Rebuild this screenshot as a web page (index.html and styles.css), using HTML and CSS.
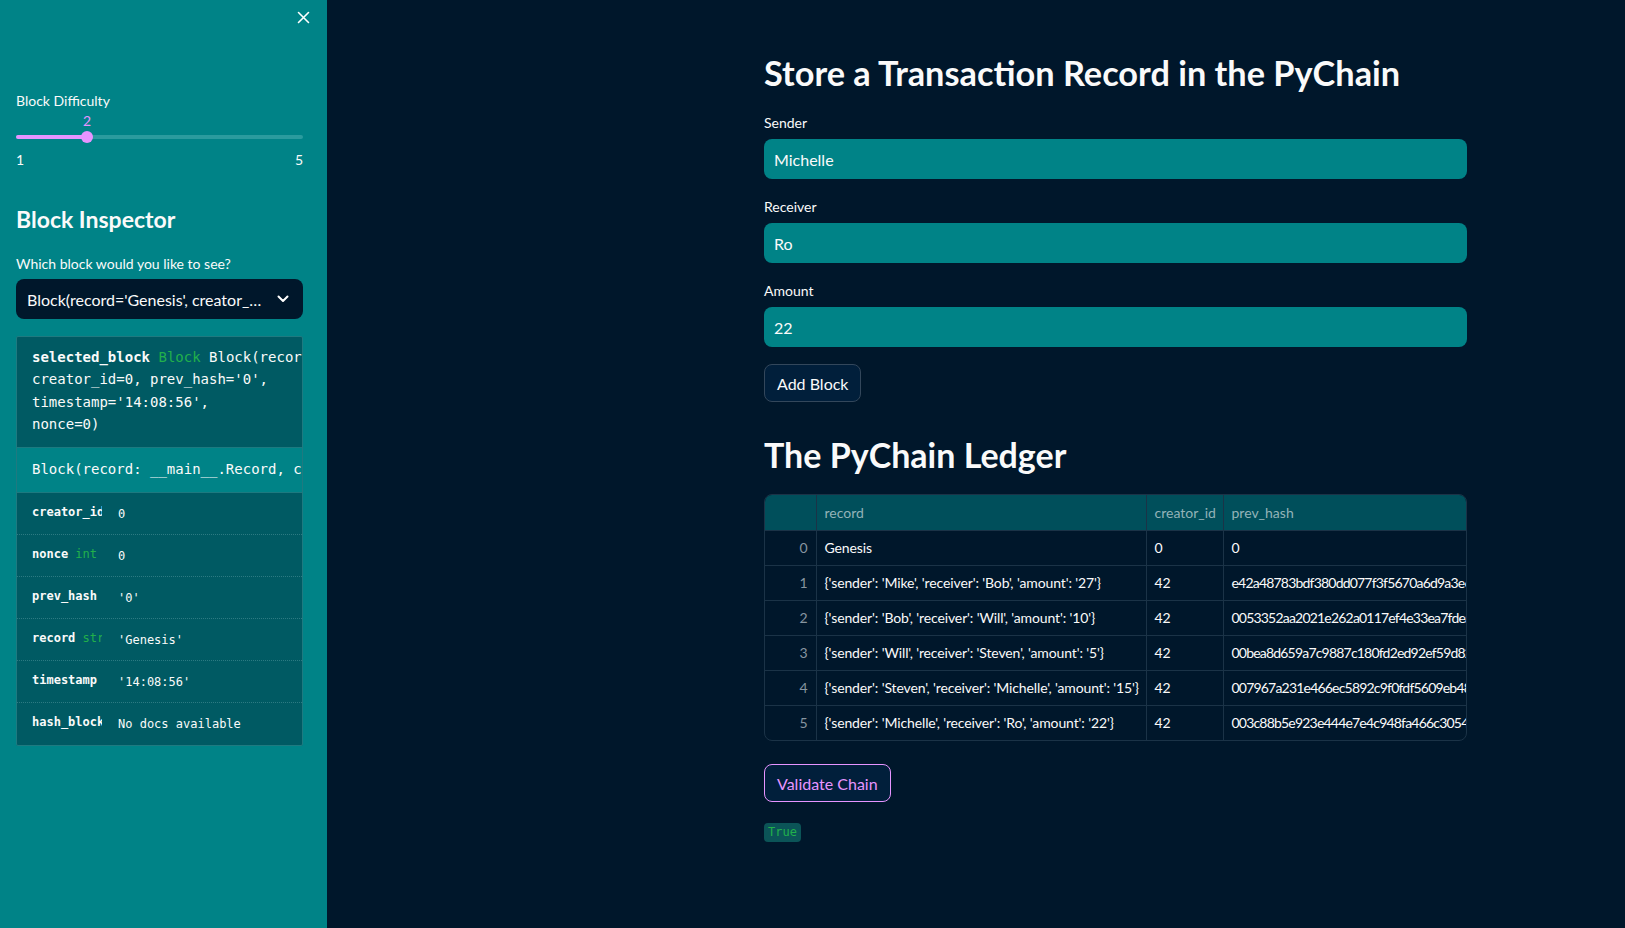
FILE: index.html
```html
<!DOCTYPE html>
<html lang="en">
<head>
<meta charset="utf-8">
<title>PyChain</title>
<link rel="stylesheet" href="styles.css">
</head>
<body>
<div class="app">
  <aside class="sidebar">
    <button class="close-btn" aria-label="Close sidebar">
      <svg width="13" height="13" viewBox="0 0 13 13"><path d="M1.5 1.5L11.5 11.5M11.5 1.5L1.5 11.5" stroke="#ffffff" stroke-width="1.6" stroke-linecap="round"/></svg>
    </button>

    <div class="widget-label">Block Difficulty</div>
    <div class="slider">
      <div class="slider-value-row"><span class="slider-value">2</span></div>
      <div class="slider-track">
        <div class="slider-fill"></div>
        <div class="slider-thumb"></div>
      </div>
      <div class="slider-range"><span>1</span><span>5</span></div>
    </div>

    <h2 class="side-heading">Block Inspector</h2>
    <div class="widget-label">Which block would you like to see?</div>
    <div class="select">
      <span class="select-text">Block(record='Genesis', creator_…</span>
      <svg class="chevron" width="12" height="8" viewBox="0 0 12 8"><path d="M1.5 1.5L6 6L10.5 1.5" fill="none" stroke="#ffffff" stroke-width="2" stroke-linecap="round" stroke-linejoin="round"/></svg>
    </div>

    <div class="inspect">
      <pre class="inspect-code"><b>selected_block</b> <span class="green">Block</span> Block(record='Genesis',
creator_id=0, prev_hash='0',
timestamp='14:08:56',
nonce=0)</pre>
      <div class="inspect-sig">Block(record: __main__.Record, creator_id: int, prev_hash: str = '0')</div>
      <div class="attr-row"><div class="attr-name"><b>creator_id</b> <span class="green">int</span></div><div class="attr-val">0</div></div>
      <div class="attr-row"><div class="attr-name"><b>nonce</b> <span class="green">int</span></div><div class="attr-val">0</div></div>
      <div class="attr-row"><div class="attr-name"><b>prev_hash</b> <span class="green">str</span></div><div class="attr-val">'0'</div></div>
      <div class="attr-row"><div class="attr-name"><b>record</b> <span class="green">str</span></div><div class="attr-val">'Genesis'</div></div>
      <div class="attr-row"><div class="attr-name"><b>timestamp</b> <span class="green">str</span></div><div class="attr-val">'14:08:56'</div></div>
      <div class="attr-row last"><div class="attr-name"><b>hash_block</b></div><div class="attr-val">No docs available</div></div>
    </div>
  </aside>

  <main class="main">
    <div class="content">
      <h1 class="title">Store a Transaction Record in the PyChain</h1>

      <div class="fields">
        <div class="field">
          <label class="field-label">Sender</label>
          <div class="input">Michelle</div>
        </div>
        <div class="field">
          <label class="field-label">Receiver</label>
          <div class="input">Ro</div>
        </div>
        <div class="field">
          <label class="field-label">Amount</label>
          <div class="input">22</div>
        </div>
      </div>

      <button class="btn">Add Block</button>

      <h2 class="heading">The PyChain Ledger</h2>

      <div class="table-wrap">
        <table class="ledger">
          <colgroup>
            <col class="c-idx"><col class="c-rec"><col class="c-cre"><col class="c-hash">
          </colgroup>
          <thead>
            <tr><th></th><th>record</th><th>creator_id</th><th>prev_hash</th></tr>
          </thead>
          <tbody>
            <tr><td class="idx">0</td><td>Genesis</td><td>0</td><td class="hash">0</td></tr>
            <tr><td class="idx">1</td><td>{'sender': 'Mike', 'receiver': 'Bob', 'amount': '27'}</td><td>42</td><td class="hash">e42a48783bdf380dd077f3f5670a6d9a3e6</td></tr>
            <tr><td class="idx">2</td><td>{'sender': 'Bob', 'receiver': 'Will', 'amount': '10'}</td><td>42</td><td class="hash">0053352aa2021e262a0117ef4e33ea7fdea</td></tr>
            <tr><td class="idx">3</td><td>{'sender': 'Will', 'receiver': 'Steven', 'amount': '5'}</td><td>42</td><td class="hash">00bea8d659a7c9887c180fd2ed92ef59d82</td></tr>
            <tr><td class="idx">4</td><td>{'sender': 'Steven', 'receiver': 'Michelle', 'amount': '15'}</td><td>42</td><td class="hash">007967a231e466ec5892c9f0fdf5609eb48</td></tr>
            <tr><td class="idx">5</td><td>{'sender': 'Michelle', 'receiver': 'Ro', 'amount': '22'}</td><td>42</td><td class="hash">003c88b5e923e444e7e4c948fa466c3054e</td></tr>
          </tbody>
        </table>
      </div>

      <button class="btn btn-primary">Validate Chain</button>

      <div class="result"><code class="true">True</code></div>
    </div>
  </main>
</div>
</body>
</html>
```

FILE: styles.css
```css
* { box-sizing: border-box; }

html, body {
  margin: 0;
  padding: 0;
  height: 100%;
}

body {
  font-family: "Lato", "Liberation Sans", sans-serif;
  color: #fafafa;
  background: #00172b;
  overflow: hidden;
}

.app {
  display: flex;
  height: 928px;
}

/* ---------- Sidebar ---------- */
.sidebar {
  position: relative;
  width: 327px;
  flex: 0 0 327px;
  background: #008387;
  padding: 91px 24px 0 16px;
  display: flex;
  flex-direction: column;
}

.close-btn {
  position: absolute;
  top: 10px;
  left: 296px;
  width: 14px;
  height: 14px;
  padding: 0;
  border: 0;
  background: transparent;
  display: flex;
  align-items: center;
  justify-content: center;
}

.widget-label {
  font-size: 14px;
  line-height: 20px;
  color: #fafafa;
}

.slider {
  display: flex;
  flex-direction: column;
}

.slider-value-row {
  height: 20px;
  position: relative;
}

.slider-value {
  position: absolute;
  left: 71px;
  top: 0;
  transform: translateX(-50%);
  font-size: 14px;
  line-height: 20px;
  color: #e694ff;
}

.slider-track {
  position: relative;
  height: 12px;
  display: flex;
  align-items: center;
}

.slider-track::before {
  content: "";
  position: absolute;
  left: 0;
  right: 0;
  top: 4px;
  height: 4px;
  border-radius: 2px;
  background: #2a9b9e;
}

.slider-fill {
  position: relative;
  width: 71px;
  height: 4px;
  border-radius: 2px 0 0 2px;
  background: #e694ff;
}

.slider-thumb {
  position: absolute;
  left: 65px;
  top: 0;
  width: 12px;
  height: 12px;
  border-radius: 50%;
  background: #e694ff;
}

.slider-range {
  display: flex;
  justify-content: space-between;
  margin-top: 7px;
  font-size: 14px;
  line-height: 20px;
}

.side-heading {
  margin: 33px 0 19px;
  font-size: 23px;
  line-height: 32px;
  font-weight: 700;
}

.select {
  margin-top: 5px;
  height: 40px;
  border-radius: 8px;
  background: #00172b;
  display: flex;
  align-items: center;
  padding: 0 14px 0 11px;
  gap: 8px;
}

.select-text {
  flex: 1;
  font-size: 16px;
  white-space: nowrap;
  overflow: hidden;
}

.chevron {
  flex: 0 0 auto;
}

.inspect {
  margin-top: 17px;
  background: #005a63;
  border: 1px solid #1f7a80;
  border-radius: 2px;
  overflow: hidden;
  font-family: "DejaVu Sans Mono", "Liberation Mono", monospace;
}

.inspect-code {
  margin: 0;
  padding: 9px 15px 12px;
  font-family: inherit;
  font-size: 14px;
  line-height: 22.3px;
  white-space: pre;
  overflow: hidden;
  color: #fafafa;
}

.green {
  color: #22b04b;
  font-weight: 400;
}

.inspect-sig {
  height: 46px;
  display: flex;
  align-items: center;
  padding: 0 15px 3px;
  background: #008387;
  border-top: 1px solid #1d7a80;
  border-bottom: 1px solid #1d7a80;
  font-size: 14px;
  white-space: nowrap;
  overflow: hidden;
}

.attr-row {
  height: 42px;
  display: grid;
  grid-template-columns: 70px 1fr;
  column-gap: 16px;
  align-items: center;
  padding: 0 15px;
  border-bottom: 1px dotted #2c7a82;
  font-size: 12px;
}

.attr-row.last {
  border-bottom: 0;
}

.attr-name {
  white-space: nowrap;
  overflow: hidden;
  margin-top: -4px;
}

.attr-val {
  white-space: nowrap;
  overflow: hidden;
}

/* ---------- Main ---------- */
.main {
  flex: 1;
  padding: 50px 0 0 437px;
}

.content {
  width: 703px;
  display: flex;
  flex-direction: column;
  align-items: flex-start;
}

.title {
  margin: 0 0 17px;
  font-size: 34.3px;
  line-height: 46px;
  font-weight: 700;
  white-space: nowrap;
}

.fields {
  width: 100%;
  display: flex;
  flex-direction: column;
  gap: 18px;
}

.field {
  display: flex;
  flex-direction: column;
}

.field-label {
  font-size: 14px;
  line-height: 20px;
  margin-bottom: 6px;
}

.input {
  height: 40px;
  border-radius: 8px;
  background: #008387;
  padding: 0 10px;
  display: flex;
  align-items: center;
  font-size: 16px;
}

.btn {
  margin-top: 17px;
  height: 38px;
  padding: 0 12px;
  border-radius: 8px;
  border: 1px solid #33475b;
  background: #011f3b;
  color: #fafafa;
  font-family: inherit;
  font-size: 16px;
}

.heading {
  margin: 33px 0 19px;
  font-size: 34px;
  line-height: 40px;
  font-weight: 700;
}

.table-wrap {
  width: 703px;
  border: 1px solid #1b3347;
  border-radius: 8px;
  overflow: hidden;
}

.ledger {
  table-layout: fixed;
  border-collapse: collapse;
  width: 790px;
  font-size: 14px;
}

.c-idx { width: 51px; }
.c-rec { width: 330px; }
.c-cre { width: 77px; }
.c-hash { width: 332px; }

.ledger th,
.ledger td {
  padding: 0 8px;
  text-align: left;
  white-space: nowrap;
  overflow: hidden;
  border-right: 1px solid #1b3347;
  border-bottom: 1px solid #1b3347;
}

.ledger th {
  height: 35px;
  background: #004f5b;
  color: #93b3b8;
  font-weight: 400;
}

.ledger td {
  height: 35px;
  color: #fafafa;
  letter-spacing: -0.12px;
}

.ledger td.hash {
  letter-spacing: -0.8px;
}

.ledger tbody tr:last-child td {
  border-bottom: 0;
}

.ledger td.idx {
  text-align: right;
  color: #8795a0;
}

.btn-primary {
  margin-top: 23px;
  border-color: #e694ff;
  color: #e694ff;
}

.result {
  margin-top: 18px;
}

.true {
  display: inline-block;
  height: 19px;
  line-height: 19px;
  padding: 0 4px;
  border-radius: 4px;
  background: #0b5457;
  color: #21b04b;
  font-family: "DejaVu Sans Mono", "Liberation Mono", monospace;
  font-size: 12px;
}
```
